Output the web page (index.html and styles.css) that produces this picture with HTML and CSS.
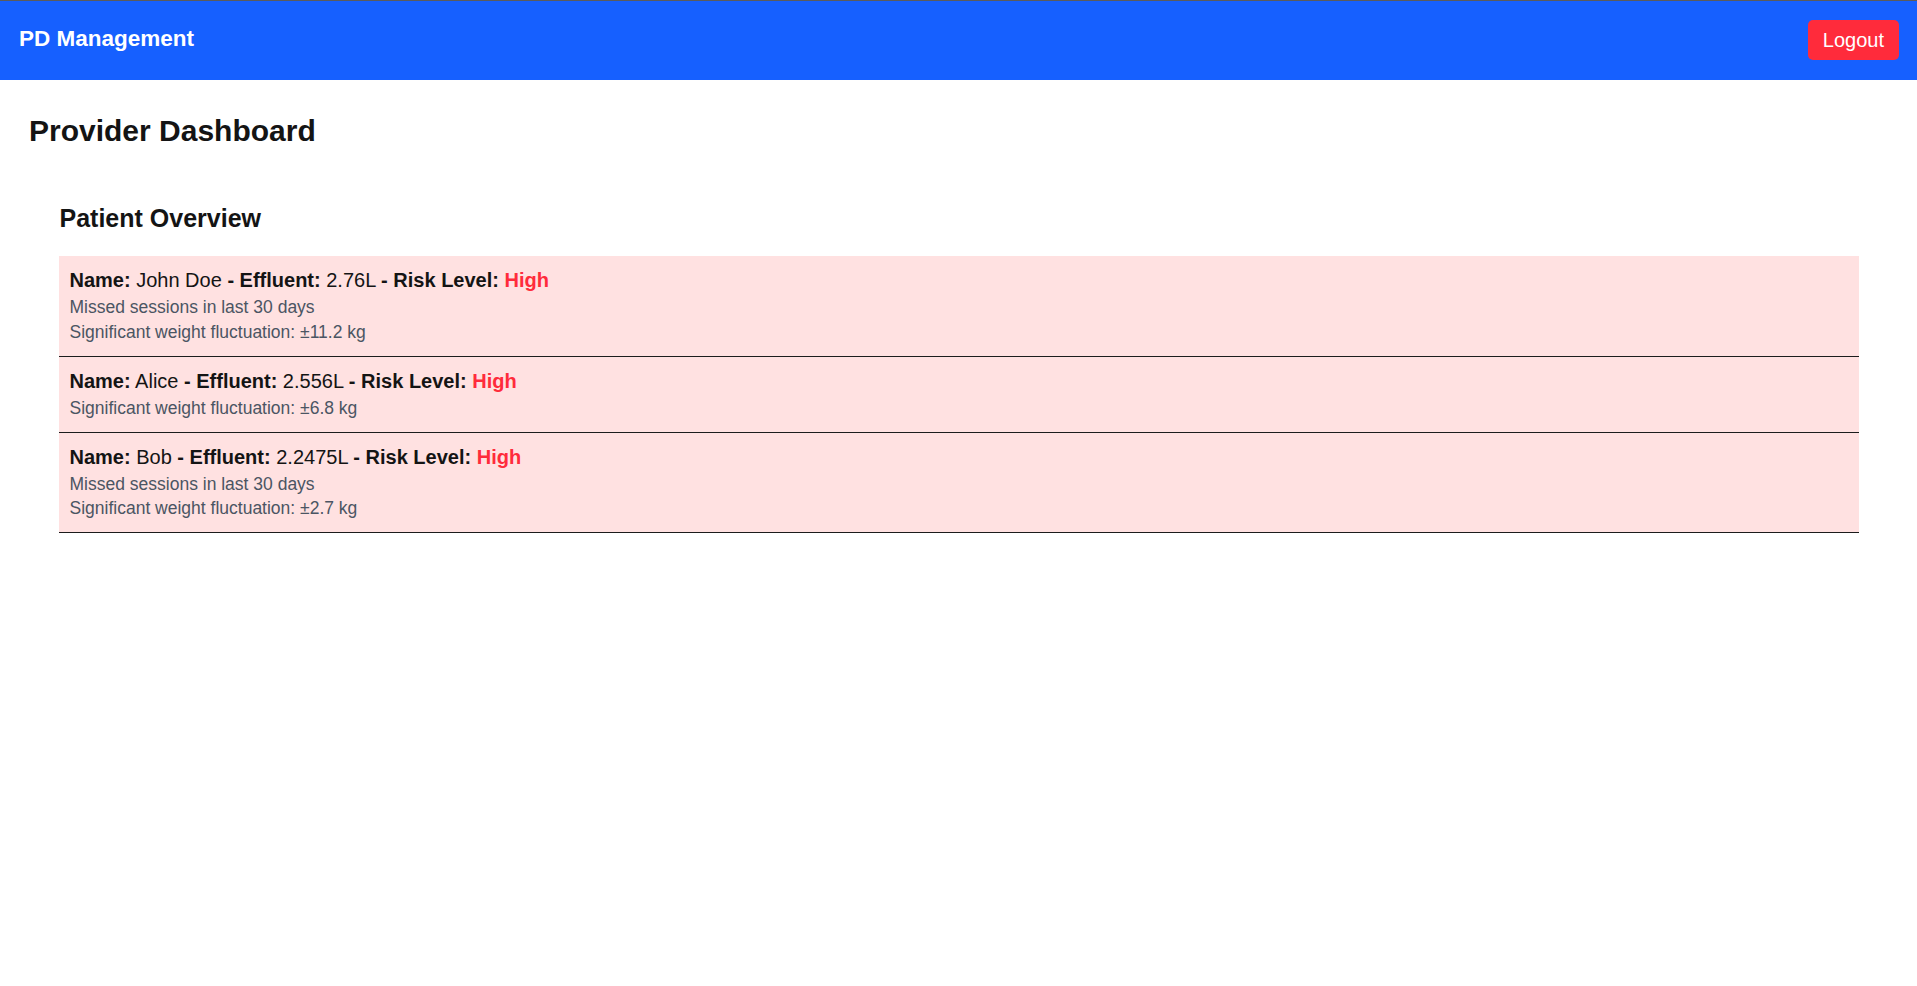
FILE: index.html
```html
<!DOCTYPE html>
<html lang="en">
<head>
<meta charset="utf-8">
<title>PD Management</title>
<link rel="stylesheet" href="styles.css">
</head>
<body>
<header class="topbar">
  <div class="brand">PD Management</div>
  <button class="logout">Logout</button>
</header>
<main class="main">
  <h1 class="page-title">Provider Dashboard</h1>
  <section class="overview">
    <h2 class="section-title">Patient Overview</h2>
    <ul class="patients">
      <li class="patient">
        <div class="summary"><strong>Name:</strong> John Doe <strong>- Effluent:</strong> 2.76L <strong>- Risk Level:</strong> <strong class="risk">High</strong></div>
        <span class="note first">Missed sessions in last 30 days</span>
        <span class="note">Significant weight fluctuation: ±11.2 kg</span>
      </li>
      <li class="patient">
        <div class="summary"><strong>Name:</strong> Alice <strong>- Effluent:</strong> 2.556L <strong>- Risk Level:</strong> <strong class="risk">High</strong></div>
        <span class="note first">Significant weight fluctuation: ±6.8 kg</span>
      </li>
      <li class="patient">
        <div class="summary"><strong>Name:</strong> Bob <strong>- Effluent:</strong> 2.2475L <strong>- Risk Level:</strong> <strong class="risk">High</strong></div>
        <span class="note first">Missed sessions in last 30 days</span>
        <span class="note">Significant weight fluctuation: ±2.7 kg</span>
      </li>
    </ul>
  </section>
</main>
</body>
</html>
```
FILE: styles.css
```css
* { box-sizing: border-box; }
html, body {
  margin: 0;
  padding: 0;
  background: #ffffff;
  font-family: "Liberation Sans", Arial, sans-serif;
  color: #141414;
}
.topbar {
  height: 80px;
  border-top: 1px solid #5b5b5b;
  background: #1660ff;
  display: flex;
  align-items: center;
  justify-content: space-between;
  padding: 0 18px 0 19px;
}
.brand {
  color: #ffffff;
  font-weight: bold;
  font-size: 22.5px;
  line-height: 26px;
  margin-bottom: 4px;
}
.logout {
  font-family: "Liberation Sans", Arial, sans-serif;
  font-size: 20px;
  color: #ffffff;
  background: #ff2b3b;
  border: none;
  border-radius: 5px;
  height: 40px;
  padding: 0 15px;
  line-height: 40px;
  margin-bottom: 1px;
}
.main {
  padding: 34px 28px 0 29px;
}
.page-title {
  margin: 0;
  font-size: 30px;
  line-height: 34.5px;
  font-weight: bold;
}
.overview {
  padding: 55px 30.5px 0 29.5px;
}
.section-title {
  margin: 0 0 24px 1px;
  font-size: 25px;
  line-height: 28.5px;
  font-weight: bold;
}
.patients {
  list-style: none;
  margin: 0;
  padding: 0;
}
.patient {
  background: #ffe1e1;
  border-bottom: 1px solid #1c1c1c;
  padding: 12px 10px 11.5px 11px;
}
.summary {
  font-size: 20px;
  line-height: 24px;
}
.risk {
  color: #ff2b3b;
}
.note {
  display: block;
  font-size: 17.5px;
  line-height: 24.5px;
  color: #4b5563;
}
.note.first {
  margin-top: 3px;
}
```
